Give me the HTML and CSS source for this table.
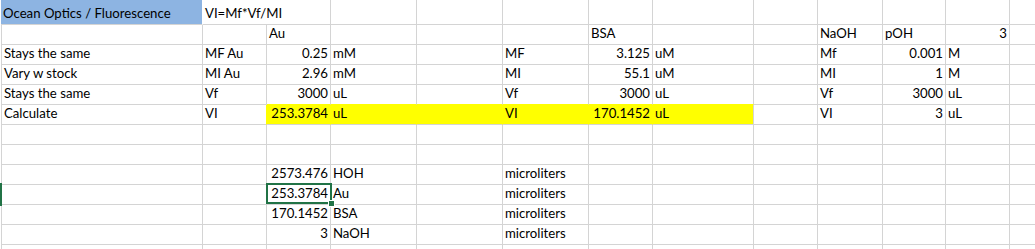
FILE: index.html
```html
<!DOCTYPE html>
<html>
<head>
<meta charset="utf-8">
<link rel="stylesheet" href="styles.css">
</head>
<body>
<div class="sheet">
  <!-- row 1 -->
  <div class="c blue">Ocean Optics / Fluorescence</div>
  <div class="c spill">VI=Mf*Vf/MI</div>
  <div class="c"></div><div class="c"></div><div class="c"></div><div class="c"></div><div class="c"></div><div class="c"></div><div class="c"></div><div class="c"></div><div class="c"></div><div class="c"></div><div class="c"></div>
  <!-- row 2 -->
  <div class="c"></div><div class="c"></div>
  <div class="c">Au</div>
  <div class="c"></div><div class="c"></div><div class="c"></div>
  <div class="c">BSA</div>
  <div class="c"></div><div class="c"></div>
  <div class="c">NaOH</div>
  <div class="c">pOH</div>
  <div class="c r">3</div>
  <div class="c"></div>
  <!-- row 3 -->
  <div class="c">Stays the same</div>
  <div class="c">MF Au</div>
  <div class="c r">0.25</div>
  <div class="c">mM</div>
  <div class="c"></div>
  <div class="c">MF</div>
  <div class="c r">3.125</div>
  <div class="c">uM</div>
  <div class="c"></div>
  <div class="c">Mf</div>
  <div class="c r">0.001</div>
  <div class="c">M</div>
  <div class="c"></div>
  <!-- row 4 -->
  <div class="c">Vary w stock</div>
  <div class="c">MI Au</div>
  <div class="c r">2.96</div>
  <div class="c">mM</div>
  <div class="c"></div>
  <div class="c">MI</div>
  <div class="c r">55.1</div>
  <div class="c">uM</div>
  <div class="c"></div>
  <div class="c">MI</div>
  <div class="c r">1</div>
  <div class="c">M</div>
  <div class="c"></div>
  <!-- row 5 -->
  <div class="c">Stays the same</div>
  <div class="c">Vf</div>
  <div class="c r above-fill">3000</div>
  <div class="c above-fill">uL</div>
  <div class="c above-fill"></div>
  <div class="c above-fill">Vf</div>
  <div class="c r above-fill">3000</div>
  <div class="c above-fill">uL</div>
  <div class="c"></div>
  <div class="c">Vf</div>
  <div class="c r">3000</div>
  <div class="c">uL</div>
  <div class="c"></div>
  <!-- row 6 -->
  <div class="c">Calculate</div>
  <div class="c left-of-fill">VI</div>
  <div class="c r fill">253.3784</div>
  <div class="c fill">uL</div>
  <div class="c fill"></div>
  <div class="c fill">VI</div>
  <div class="c r fill">170.1452</div>
  <div class="c fill fill-end">uL</div>
  <div class="c"></div>
  <div class="c">VI</div>
  <div class="c r">3</div>
  <div class="c">uL</div>
  <div class="c"></div>
  <!-- row 7 -->
  <div class="c"></div><div class="c"></div><div class="c"></div><div class="c"></div><div class="c"></div><div class="c"></div><div class="c"></div><div class="c"></div><div class="c"></div><div class="c"></div><div class="c"></div><div class="c"></div><div class="c"></div>
  <!-- row 8 -->
  <div class="c"></div><div class="c"></div><div class="c"></div><div class="c"></div><div class="c"></div><div class="c"></div><div class="c"></div><div class="c"></div><div class="c"></div><div class="c"></div><div class="c"></div><div class="c"></div><div class="c"></div>
  <!-- row 9 -->
  <div class="c"></div><div class="c"></div>
  <div class="c r">2573.476</div>
  <div class="c">HOH</div>
  <div class="c"></div>
  <div class="c">microliters</div>
  <div class="c"></div><div class="c"></div><div class="c"></div><div class="c"></div><div class="c"></div><div class="c"></div><div class="c"></div>
  <!-- row 10 -->
  <div class="c row-mark"><span class="row-flag"></span></div>
  <div class="c"></div>
  <div class="c r active">253.3784<span class="sel"></span><span class="handle"></span></div>
  <div class="c">Au</div>
  <div class="c"></div>
  <div class="c">microliters</div>
  <div class="c"></div><div class="c"></div><div class="c"></div><div class="c"></div><div class="c"></div><div class="c"></div><div class="c"></div>
  <!-- row 11 -->
  <div class="c"></div><div class="c"></div>
  <div class="c r">170.1452</div>
  <div class="c">BSA</div>
  <div class="c"></div>
  <div class="c">microliters</div>
  <div class="c"></div><div class="c"></div><div class="c"></div><div class="c"></div><div class="c"></div><div class="c"></div><div class="c"></div>
  <!-- row 12 -->
  <div class="c"></div><div class="c"></div>
  <div class="c r">3</div>
  <div class="c">NaOH</div>
  <div class="c"></div>
  <div class="c">microliters</div>
  <div class="c"></div><div class="c"></div><div class="c"></div><div class="c"></div><div class="c"></div><div class="c"></div><div class="c"></div>
  <!-- row 13 -->
  <div class="c"></div><div class="c"></div><div class="c"></div><div class="c"></div><div class="c"></div><div class="c"></div><div class="c"></div><div class="c"></div><div class="c"></div><div class="c"></div><div class="c"></div><div class="c"></div><div class="c"></div>
</div>
</body>
</html>
```
FILE: styles.css
```css
html, body {
  margin: 0;
  padding: 0;
  background: #ffffff;
  overflow: hidden;
}

.sheet {
  display: grid;
  grid-template-columns: 201px 64px 64px 86px 86px 86px 64px 101px 64px 65px 63px 64px 64px;
  grid-template-rows: 25px repeat(12, 20px);
  margin-left: 1px;
  border-left: 1px solid #d4d4d4;
  width: max-content;
  font-family: Lato, "Open Sans", sans-serif;
  font-size: 13.2px;
  color: #000000;
}

.c {
  box-sizing: border-box;
  border-right: 1px solid #d4d4d4;
  border-bottom: 1px solid #d4d4d4;
  display: flex;
  align-items: flex-end;
  justify-content: flex-start;
  padding: 0 2px 3px 2px;
  line-height: 15px;
  white-space: nowrap;
  overflow: hidden;
  position: relative;
}

.r {
  justify-content: flex-end;
}

.blue {
  background: #8db4e2;
  margin-left: -1px;
  border-right-color: #ffffff;
}

.spill {
  overflow: visible;
  border-right: none;
  z-index: 1;
}

.fill {
  background: #ffff00;
  border-right-color: #ffff00;
}

.fill-end {
  border-right-color: #d4d4d4;
}

.above-fill {
  border-bottom-color: #ffff00;
}

.left-of-fill {
  border-right-color: #ffff00;
}

.active,
.row-mark {
  overflow: visible;
}

.sel {
  position: absolute;
  left: -1px;
  top: -2px;
  width: 66px;
  height: 21px;
  box-sizing: border-box;
  border: 2px solid #217346;
  z-index: 2;
}

.handle {
  position: absolute;
  left: 62px;
  top: 16px;
  width: 5px;
  height: 5px;
  background: #217346;
  box-shadow: 0 0 0 1px #ffffff;
  z-index: 3;
}

.row-flag {
  position: absolute;
  left: -2px;
  top: -2px;
  width: 2px;
  height: 23px;
  background: #217346;
}
```
